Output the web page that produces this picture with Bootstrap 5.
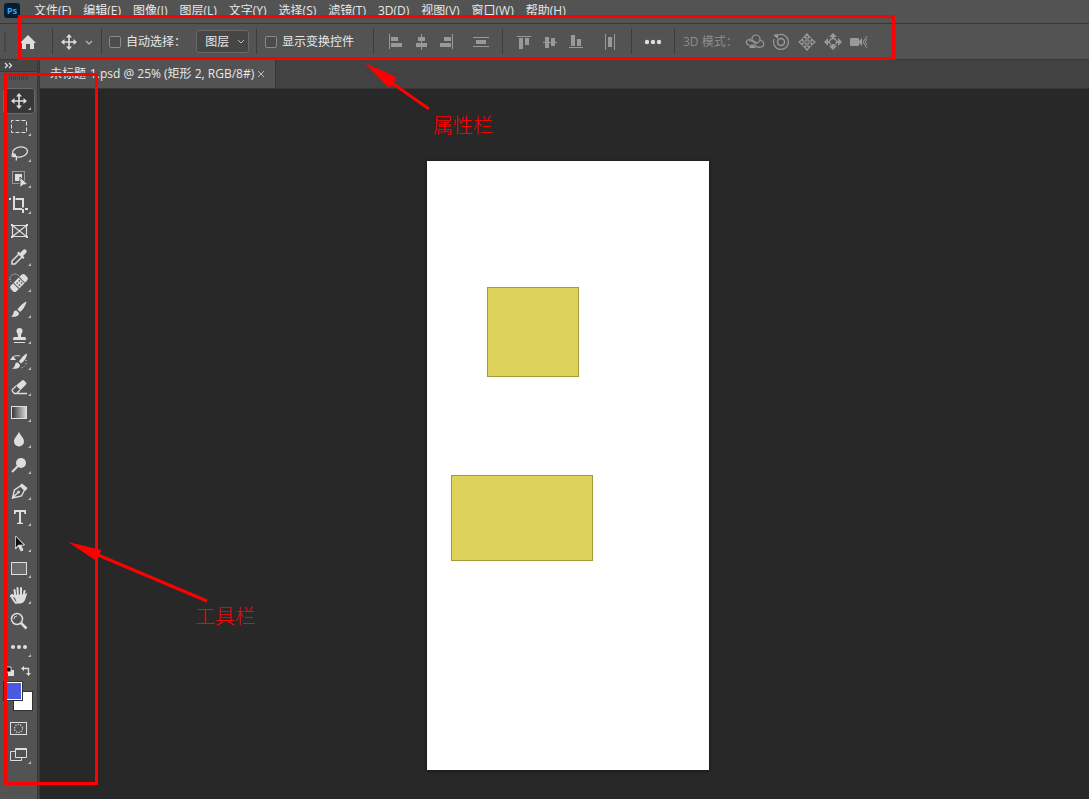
<!DOCTYPE html>
<html lang="zh-CN">
<head>
<meta charset="utf-8">
<meta name="viewport" content="width=device-width, initial-scale=1">
<title>未标题-1.psd</title>
<link href="https://cdn.jsdelivr.net/npm/bootstrap@5.3.0/dist/css/bootstrap.min.css" rel="stylesheet">
<style>
:root{--panel:#535353;--edge:#383838;--trough:#424242;--ink:#dedede;--dim:#999}
body{background:#282828;color:#e8e8e8;font:12px/16px "Open Sans","Noto Sans CJK SC",sans-serif}
.app{min-height:100vh;overflow:hidden}
.menubar,.optionbar{background:var(--panel);border-bottom:1px solid var(--edge)}
.menubar{height:24px;padding-left:4px;gap:12px}
.menubar a{color:#e8e8e8;text-decoration:none;margin-top:3px}
.ps-logo{width:18px;margin-top:2px}
.optionbar{height:36px}
.opt-group{height:25px;border-right:1px solid #3c3c3c}
.group-home{width:53px}
.group-tool{width:49px}
.group-auto{width:155px}
.group-auto label{width:70px}
.group-ctrl{width:117px}
.opt-group label{margin-left:5px}
.pad{padding:0 8px}
.group-auto.pad{padding:0 7px}
button{background:none;border:0;padding:0;color:var(--ink);line-height:0}
.align-btn{width:26px;height:26px;color:var(--dim)}
.form-check-input.tick{width:12px;height:12px;margin:0;background-color:#4c4c4c;border:1px solid #8a8a8a;border-radius:2px}
.layer-select{width:53px;height:23px;margin-left:1px;padding:0 0 0 8px;color:#e8e8e8;background:#464646 url("data:image/svg+xml,%3Csvg xmlns='http://www.w3.org/2000/svg' width='8' height='6'%3E%3Cpath d='M1 1l3 3 3-3' fill='none' stroke='%23bbb'/%3E%3C/svg%3E") no-repeat right 3px center;border:1px solid #686868;border-radius:3px;appearance:none;font-size:12px}
.mode-label{width:59px;color:#8c8c8c}
.toolbar{width:37px;background:var(--panel)}
.gutter{width:3px;background:var(--trough);border:solid var(--edge);border-width:0 1px}
.tool-head{height:12px;background:#464646;border-bottom:1px solid var(--edge);line-height:0}
.grip{height:4px;margin:4px 9px 8px;background:repeating-linear-gradient(90deg,#414141 0 1px,transparent 1px 2px)}
.tool{width:32px;height:26px;margin-left:3px;display:block}
.tool.active{background:#383838;outline:1px solid #6a6a6a;outline-offset:-1px;border-radius:3px}
.swatches{height:51px;margin-bottom:4px}
.tabstrip{height:29px;background:var(--trough);border-bottom:1px solid var(--edge)}
.doc-tab{width:236px;background:var(--panel);padding-left:10px;gap:3px;border-right:1px solid var(--edge)}
.stage{padding:72px 0 29px 7px}
.artboard{width:282px;height:609px;background:#fff;box-shadow:0 1px 4px #0008}
.shape{background:#ddd35a;border:1px solid #a29a3c}
.shape-a{left:60px;top:126px;width:92px;height:90px}
.shape-b{left:24px;top:314px;width:142px;height:86px}
.note-frame{border:3px solid #f00;pointer-events:none}
.frame-options{left:18px;top:15px;width:877px;height:45px}
.frame-tools{left:4px;top:73px;width:94px;height:712px}
.note-text{color:#f00;font:300 20px/24px "Liberation Serif","Noto Sans CJK SC",serif}
.note-a{left:433px;top:114px}
.note-b{left:195px;top:605px}
.arrows{left:0;top:0;pointer-events:none}
</style>
<script src="https://cdn.jsdelivr.net/npm/bootstrap@5.3.0/dist/js/bootstrap.bundle.min.js"></script>
</head>
<body>
<svg class="d-none" aria-hidden="true">
<symbol id="more" viewBox="0 0 4 4"><path d="M4 0v4H0z" fill="#bbb"/></symbol>
<symbol id="move" viewBox="0 0 16 16"><path d="M8 2v12M2 8h12" stroke="currentColor" stroke-width="1.600"/><path d="M8 0l3 3.500H5zM8 16l3-3.500H5zM0 8l3.500-3v6zM16 8l-3.500-3v6z" fill="currentColor"/></symbol>
</svg>
<div class="app d-flex flex-column position-relative">
<nav class="menubar d-flex align-items-start text-nowrap">
<svg class="ps-logo" height="18" viewBox="0 0 18 18"><rect y="1" width="16" height="15" rx="3" fill="#001e36"/><text x="3" y="12" font-size="9" font-weight="700" fill="#31a8ff">Ps</text></svg>
<a href="#">文件(F)</a><a href="#">编辑(E)</a><a href="#">图像(I)</a><a href="#">图层(L)</a><a href="#">文字(Y)</a><a href="#">选择(S)</a><a href="#">滤镜(T)</a><a href="#">3D(D)</a><a href="#">视图(V)</a><a href="#">窗口(W)</a><a href="#">帮助(H)</a>
</nav>
<div class="optionbar d-flex align-items-center text-nowrap">
<div class="opt-group group-home d-flex align-items-center">
<svg width="52" height="26" fill="none"><path d="M5 4v20" stroke="#3c3c3c" stroke-width="2" stroke-dasharray="1 1"/><path d="M28 6l-8 8h2v6h4v-5h4v5h4v-6h2z" fill="#dedede"/></svg></div>
<div class="opt-group group-tool d-flex align-items-center">
<button class="ms-2" aria-label="移动工具"><svg width="34" height="16"><use href="#move" width="16" height="16"/><path d="M25 7l3 3 3-3" fill="none" stroke="#bbb" stroke-width="1.200"/></svg></button></div>
<div class="opt-group group-auto d-flex align-items-center pad">
<input class="form-check-input tick" type="checkbox" id="auto"><label for="auto">自动选择：</label>
<select class="layer-select" aria-label="图层"><option>图层</option></select></div>
<div class="opt-group group-ctrl d-flex align-items-center pad">
<input class="form-check-input tick" type="checkbox" id="ctrl"><label for="ctrl">显示变换控件</label></div>
<div class="opt-group d-flex align-items-center pad">
<button class="align-btn" aria-label="左对齐"><svg width="26" height="26" fill="currentColor"><path d="M7 5h1v15H7zM9 8h7v4H9zM9 14h11v4H9z"/></svg></button>
<button class="align-btn" aria-label="水平居中"><svg width="26" height="26" fill="currentColor"><path d="M13 5h1v16h-1zM10 8h7v4h-7zM8 14h11v4H8z"/></svg></button>
<button class="align-btn" aria-label="右对齐"><svg width="26" height="26" fill="currentColor"><path d="M18 5h1v15h-1zM10 8h7v4h-7zM6 14h11v4H6z"/></svg></button>
<button class="align-btn ms-2" aria-label="垂直分布"><svg width="26" height="26" fill="currentColor"><path d="M5 8h16v1H5zM5 17h16v1H5zM8 11h10v4H8z"/></svg></button></div>
<div class="opt-group d-flex align-items-center pad">
<button class="align-btn" aria-label="顶对齐"><svg width="26" height="26" fill="currentColor"><path d="M6 7h14v1H6zM8 9h4v11H8zM14 9h4v7h-4z"/></svg></button>
<button class="align-btn" aria-label="垂直居中"><svg width="26" height="26" fill="currentColor"><path d="M6 13h14v1H6zM8 8h4v11H8zM14 9h4v8h-4z"/></svg></button>
<button class="align-btn" aria-label="底对齐"><svg width="26" height="26" fill="currentColor"><path d="M6 18h14v1H6zM8 6h4v11H8zM14 10h4v7h-4z"/></svg></button>
<button class="align-btn ms-2" aria-label="水平分布"><svg width="26" height="26" fill="currentColor"><path d="M8 5h1v16H8zM17 5h1v16h-1zM11 8h4v10h-4z"/></svg></button></div>
<div class="opt-group d-flex align-items-center pad">
<button class="align-btn" aria-label="更多"><svg width="26" height="26" fill="#dedede"><circle cx="7" cy="13" r="2.200"/><circle cx="13" cy="13" r="2.200"/><circle cx="19" cy="13" r="2.200"/></svg></button></div>
<div class="d-flex align-items-center pad">
<span class="mode-label">3D 模式：</span>
<button class="align-btn" aria-label="旋转"><svg width="26" height="26" fill="none" stroke="currentColor" stroke-width="1.200"><circle cx="14" cy="10" r="4"/><path d="M9.500 10c-5 0-7 4-3 6l5 2M18 11c5 2 5 6 1 7-3 1-6-1-7-3M7 12c3-1 6 0 8 3"/><path d="M7 19h7l-4-4z" fill="currentColor" stroke="none"/></svg></button>
<button class="align-btn" aria-label="滚动"><svg width="26" height="26" fill="none" stroke="currentColor" stroke-width="1.200"><circle cx="13" cy="13" r="3.500" stroke-width="1.500"/><path d="M10 6a7.500 7.500 0 1 1-4 4"/><path d="M5 6l5-1v5z" fill="currentColor" stroke="none"/></svg></button>
<button class="align-btn" aria-label="拖动"><svg width="26" height="26" fill="none" stroke="currentColor" stroke-width="1.200"><path d="M13 5l3 3.500h-2V12h3.500v-2l3.500 3-3.500 3v-2H14v3.500h2L13 21l-3-3.500h2V14H8.500v2L5 13l3.500-3v2H12V8.500h-2z"/></svg></button>
<button class="align-btn" aria-label="滑动"><svg width="26" height="26" fill="none" stroke="currentColor"><circle cx="13" cy="13" r="3.500" stroke-width="1.300"/><path d="M13 4l4 4h-3v2h-2V8H9zM13 21l4-4h-3v-2h-2v2H9zM4 13l4-4v3h2v2H8v3zM22 13l-4-4v3h-2v2h2v3z" fill="currentColor" stroke="none"/></svg></button>
<button class="align-btn" aria-label="变焦"><svg width="26" height="26" fill="currentColor"><rect x="4" y="9" width="9" height="8" rx="1"/><path d="M12 13l4-4v8z"/><path d="M21 7l-4 6 4 6M21 10l-2 3 2 3" fill="none" stroke="currentColor"/></svg></button>
</div>
</div>
<div class="d-flex flex-fill">
<aside class="toolbar flex-shrink-0">
<div class="tool-head"><svg width="20" height="11" fill="none" stroke="#dedede" stroke-width="1.300"><path d="M5 3l2.500 2.500L5 8M9 3l2.500 2.500L9 8"/></svg></div>
<div class="grip"></div>
<button class="tool active" aria-label="移动"><svg width="32" height="26"><use href="#move" x="8" y="5" width="16" height="16"/><use href="#more" x="25" y="19" width="3" height="3"/></svg></button>
<button class="tool" aria-label="选框"><svg width="32" height="26"><rect x="8.500" y="6.500" width="15" height="12" fill="none" stroke="currentColor" stroke-dasharray="4 2" stroke-dashoffset="2"/><use href="#more" x="25" y="19" width="3" height="3"/></svg></button>
<button class="tool" aria-label="套索"><svg width="32" height="26"><g fill="none" stroke="currentColor" stroke-width="1.300"><ellipse cx="17" cy="12" rx="7.500" ry="5" transform="rotate(-10 17 12)"/><path d="M10 14c-2 1-1 3 1 2.500 3-.5 1-3-1-2.500M12 16c2 1 2 2 1 4.500"/></g><use href="#more" x="25" y="19" width="3" height="3"/></svg></button>
<button class="tool" aria-label="对象选择"><svg width="32" height="26"><rect x="9.500" y="5.500" width="12" height="12" fill="none" stroke="currentColor" stroke-dasharray="1 1"/><path d="M12 8h7v7h-7z" fill="currentColor"/><path d="M17 11v11l3-3 5-.5z" fill="currentColor" stroke="#535353"/><use href="#more" x="25" y="19" width="3" height="3"/></svg></button>
<button class="tool" aria-label="裁剪"><svg width="32" height="26"><path d="M6 7h2M11 4v13h8M12.500 7H20v8.500M20 17v4M22 17h3" fill="none" stroke="currentColor" stroke-width="2"/><use href="#more" x="25" y="19" width="3" height="3"/></svg></button>
<button class="tool" aria-label="图框"><svg width="32" height="26"><path d="M9.500 7.500h14v11h-14zM9.500 7.500l14 11M23.500 7.500l-14 11" fill="none" stroke="currentColor" stroke-width="1.200"/><path d="M8 6h2v2H8zM23 6h2v2h-2zM8 18h2v2H8zM23 18h2v2h-2z" fill="currentColor"/></svg></button>
<button class="tool" aria-label="吸管"><svg width="32" height="26"><path d="M16 10l-7 7v3h3l7-7" fill="none" stroke="currentColor" stroke-width="1.500"/><path d="M14 9l1.500-1.500L17 9l3-3c2-2 5 1 3 3l-3 3 1.500 1.500L20 15z" fill="currentColor"/><use href="#more" x="25" y="19" width="3" height="3"/></svg></button>
<button class="tool" aria-label="修复画笔"><svg width="32" height="26"><path d="M16 6a5 5 0 1 0-8 6" fill="none" stroke="currentColor" stroke-dasharray="1 1"/><g transform="rotate(-45 16 13)"><rect x="6" y="9" width="20" height="8" rx="2.500" fill="currentColor"/><path d="M12 9v8M20 9v8" stroke="#535353"/><path d="M14 11h1.500v1.500H14zM17 11h1.500v1.500H17zM14 14h1.500v1.500H14zM17 14h1.500v1.500H17z" fill="#535353"/></g><use href="#more" x="25" y="19" width="3" height="3"/></svg></button>
<button class="tool" aria-label="画笔"><svg width="32" height="26"><path d="M23.500 5.500c-3 1-7 5-9 8l2.500 2.500c3-2 6-7 6.500-10.500zM13.500 14.500c-2-.5-3 1-3 2.500S9 20 8 20.500c3 1 8 0 8-3.500z" fill="currentColor"/><use href="#more" x="25" y="19" width="3" height="3"/></svg></button>
<button class="tool" aria-label="图章"><svg width="32" height="26"><path d="M13.500 9a3 3 0 1 1 6 0c0 2-1.500 2-1.500 6h4q1 0 1 3H10q0-3 1-3h4c0-4-1.500-4-1.500-6zM11 20h11v1H11z" fill="currentColor"/><use href="#more" x="25" y="19" width="3" height="3"/></svg></button>
<button class="tool" aria-label="历史画笔"><svg width="32" height="26"><path d="M24 5.500c-3 1-6 5-8 8l2 2c3-2 6-6 6-10zM15 14.500c-2-.5-3 1-3 2.500S10 20 9 20.500c3 1 8 0 8-3.500zM7 12l3-4 3 4z" fill="currentColor"/><path d="M10 9c2-1.500 4-1.500 7-1" fill="none" stroke="currentColor"/><path d="M23 12c1 4-1 7-5 8" fill="none" stroke="currentColor" stroke-dasharray="1 2"/><use href="#more" x="25" y="19" width="3" height="3"/></svg></button>
<button class="tool" aria-label="橡皮擦"><svg width="32" height="26"><path d="M19 6.500q1-1 2 0l2 2q1 1 0 2l-5.500 5.500-4.500-4.500z" fill="currentColor"/><path d="M13 12l-3.500 3.500q-1 1 0 2l2 2H24M17 16l-3.500 3.500" fill="none" stroke="currentColor" stroke-width="1.300"/><use href="#more" x="25" y="19" width="3" height="3"/></svg></button>
<button class="tool" aria-label="渐变"><svg width="32" height="26"><linearGradient id="ramp"><stop stop-color="#333"/><stop offset="1" stop-color="#ddd"/></linearGradient><rect x="8.500" y="6.500" width="15" height="12" fill="url(#ramp)" stroke="currentColor"/><use href="#more" x="25" y="19" width="3" height="3"/></svg></button>
<button class="tool" aria-label="模糊"><svg width="32" height="26"><path d="M16 5.500c1 4 5 6 5 10a5 5 0 0 1-10 0c0-4 4-6 5-10z" fill="currentColor"/><use href="#more" x="25" y="19" width="3" height="3"/></svg></button>
<button class="tool" aria-label="减淡"><svg width="32" height="26"><circle cx="18" cy="11" r="5" fill="currentColor"/><path d="M15 14l-6 6" stroke="currentColor" stroke-width="2"/><use href="#more" x="25" y="19" width="3" height="3"/></svg></button>
<button class="tool" aria-label="钢笔"><svg width="32" height="26"><path d="M9.500 20l2-8 6-4 4 4-3 6zM9.500 20l5-5" fill="none" stroke="currentColor" stroke-width="1.400"/><circle cx="15.500" cy="14" r="1.500" fill="currentColor"/><path d="M17 7l2-1.500 5.500 4.500-2 3z" fill="currentColor"/><use href="#more" x="25" y="19" width="3" height="3"/></svg></button>
<button class="tool" aria-label="文字"><svg width="32" height="26"><path d="M11 6h12v4h-1.500l-.5-2h-3v10.500l2 .5v1h-6v-1l2-.5V8h-3l-.5 2H11z" fill="currentColor"/><use href="#more" x="25" y="19" width="3" height="3"/></svg></button>
<button class="tool" aria-label="路径选择"><svg width="32" height="26"><path d="M12.500 6v13l3-3 2.500 5 2-1-2.500-5h4z" fill="#dedede" stroke="currentColor"/><path d="M12.500 6v12l3-3h5.500z" fill="#111" stroke="#dedede" stroke-width=".6"/><use href="#more" x="25" y="19" width="3" height="3"/></svg></button>
<button class="tool" aria-label="矩形"><svg width="32" height="26"><rect x="8.500" y="6.500" width="15" height="12" fill="#6b6b6b" stroke="currentColor"/><use href="#more" x="25" y="19" width="3" height="3"/></svg></button>
<button class="tool" aria-label="抓手"><svg width="32" height="26"><path d="M13 21c-2-1-3-5-5-7 1-1.500 2-1 4 1V15M12.500 15l-1-7M15 14l-.5-8M18 14V6M20.500 15l1-6" fill="none" stroke="currentColor" stroke-width="2" stroke-linecap="round"/><path d="M11 13l12-1c1-2 1.500-1 1 0l-2 6q-1 3-4 3.500h-4z" fill="currentColor"/><use href="#more" x="25" y="19" width="3" height="3"/></svg></button>
<button class="tool" aria-label="缩放"><svg width="32" height="26"><circle cx="14" cy="11" r="5.500" fill="none" stroke="currentColor" stroke-width="1.500"/><path d="M18 15l5.500 5.500" stroke="currentColor" stroke-width="2.500"/><path d="M11 11q0-3 3-3" fill="none" stroke="currentColor"/></svg></button>
<button class="tool" aria-label="更多工具"><svg width="32" height="26" fill="currentColor"><circle cx="10" cy="13" r="2"/><circle cx="16" cy="13" r="2"/><circle cx="22" cy="13" r="2"/><use href="#more" x="25" y="20" width="3" height="3"/></svg></button>
<svg class="swatches d-block" width="37" height="51"><path d="M8 10h6v6H8z" fill="#dedede"/><path d="M5 7h6v5H5z" fill="#000" stroke="#dedede"/><path d="M23 8.500h5.500V13" fill="none" stroke="#dedede" stroke-width="1.300"/><path d="M21 8.500l3-2.500v5zM28.500 16l-2.500-3h5z" fill="#dedede"/><rect x="13.500" y="31.500" width="19" height="19" fill="#fff" stroke="#333"/><rect x="3.500" y="21.500" width="19" height="19" fill="#fff" stroke="#333"/><path d="M5 23h16v16H5z" fill="#4a5ae0"/></svg>
<button class="tool" aria-label="快速蒙版"><svg width="32" height="26"><rect x="7.500" y="7.500" width="16" height="12" fill="none" stroke="currentColor"/><circle cx="15.500" cy="13.500" r="4" fill="none" stroke="currentColor" stroke-width="1.200" stroke-dasharray="1.200 1.300"/></svg></button>
<button class="tool" aria-label="屏幕模式"><svg width="32" height="26"><path d="M12 10.500H7.500v9h11V17M12.500 7.500h11v9h-11zM12 8.500h12" fill="none" stroke="currentColor"/><use href="#more" x="25" y="20" width="3" height="3"/></svg></button>
</aside>
<div class="gutter flex-shrink-0"></div>
<main class="flex-fill">
<div class="tabstrip d-flex"><div class="doc-tab d-flex align-items-center text-nowrap"><span>未标题-1.psd @ 25% (矩形 2, RGB/8#)</span><button aria-label="关闭"><svg width="8" height="8"><path d="M1 1l6 6M7 1L1 7" stroke="#bbb"/></svg></button></div></div>
<div class="stage d-flex justify-content-center"><div class="artboard position-relative"><div class="shape shape-a position-absolute"></div><div class="shape shape-b position-absolute"></div></div></div>
</main>
</div>
<div class="note-frame frame-options position-absolute"></div>
<div class="note-frame frame-tools position-absolute"></div>
<svg class="arrows position-absolute" width="440" height="610" fill="#f00" stroke="#f00"><path d="M429 109L392 83M207 601L98 555" stroke-width="3"/><path d="M365 63l31 14-2 6-5 5zM68 542l33 8-1 5-5 5z" stroke="none"/></svg>
<div class="note-text note-a position-absolute">属性栏</div>
<div class="note-text note-b position-absolute">工具栏</div>
</div>
</body>
</html>
